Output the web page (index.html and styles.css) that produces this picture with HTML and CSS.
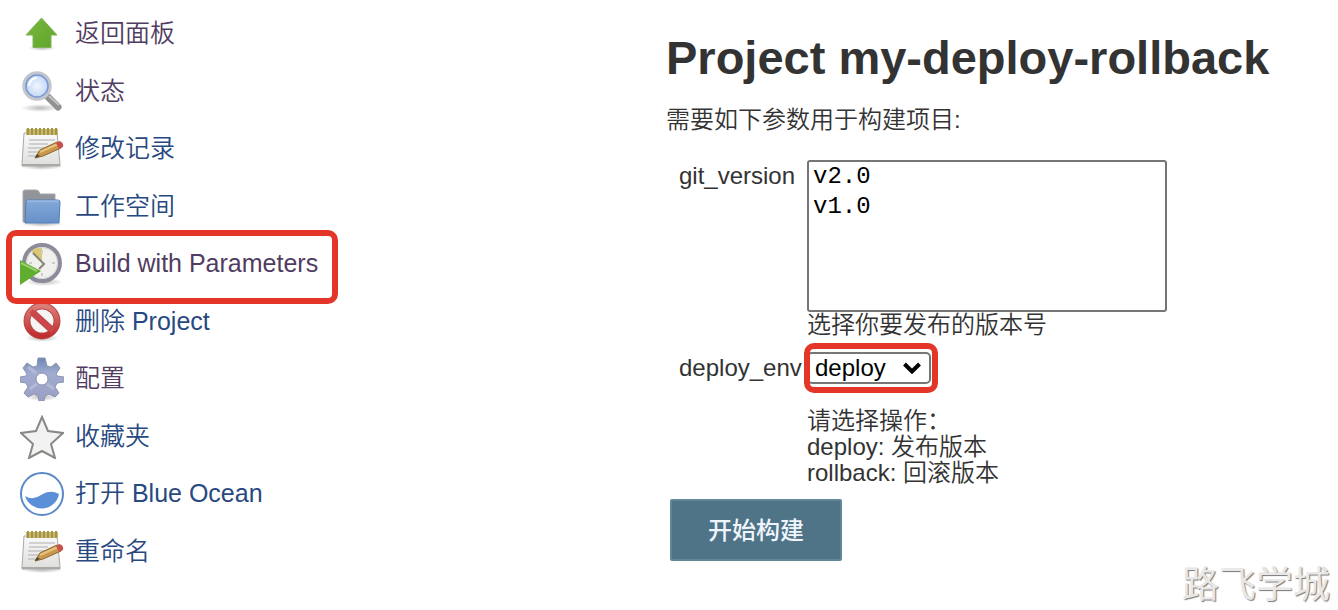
FILE: index.html
```html
<!DOCTYPE html>
<html lang="zh-CN">
<head>
<meta charset="utf-8">
<title>Project my-deploy-rollback</title>
<link rel="stylesheet" href="styles.css">
</head>
<body>
<svg class="defs" aria-hidden="true">
  <defs>
    <linearGradient id="green" x1="0" y1="0" x2="1" y2="1"><stop offset="0" stop-color="#79b83f"/><stop offset="1" stop-color="#5fa52a"/></linearGradient>
    <linearGradient id="paper" x1="0" y1="0" x2="0" y2="1"><stop offset="0" stop-color="#fafafa"/><stop offset="1" stop-color="#dededd"/></linearGradient>
    <linearGradient id="folder" x1="0" y1="0" x2="0" y2="1"><stop offset="0" stop-color="#83a9d8"/><stop offset="1" stop-color="#6690c8"/></linearGradient>
    <radialGradient id="lens"><stop offset="0" stop-color="#f0f6ff"/><stop offset="1" stop-color="#bcd3f3"/></radialGradient>
    <linearGradient id="red" x1="0" y1="0" x2="0" y2="1"><stop offset="0" stop-color="#dc7d78"/><stop offset="1" stop-color="#bf2d2d"/></linearGradient>
    <linearGradient id="gear" x1="0" y1="0" x2="0" y2="1"><stop offset="0" stop-color="#6e86b4"/><stop offset=".35" stop-color="#a0acd0"/><stop offset="1" stop-color="#9a9fc4"/></linearGradient>
    <radialGradient id="shade"><stop offset="0" stop-color="#777" stop-opacity=".5"/><stop offset="1" stop-color="#777" stop-opacity="0"/></radialGradient>
    <symbol id="notepad" viewBox="0 0 44 44">
      <ellipse cx="22" cy="40" rx="21" ry="3" fill="url(#shade)"/>
      <path d="M4 6h33l3 31v2H2v-2z" fill="url(#paper)" stroke="#aaa9a5"/>
      <path d="M2 37h38v2H2z" fill="#aaa9a5"/>
      <path d="M6 2h32v6H6z" fill="#c8b96a"/>
      <path d="M8 1v7m4-7v7m4-7v7m4-7v7m4-7v7m4-7v7m4-7v7m4-7v7" stroke="#a3944a" stroke-width="2"/>
      <path d="M9 13h26M9 17h19M8 21h22M8 25h13M8 29h10" stroke="#c4c4c4" stroke-width="1.5"/>
      <path d="M15 31l5-8 17-8 4 6-18 8z" fill="#c9984c" stroke="#8a672d"/>
      <path d="M20 25l18-8" stroke="#e6c37f" stroke-width="2"/>
      <path d="M36 16l3-2q5 1 4 6l-4 2z" fill="#c9514c"/>
      <path d="M15 31l2-4 3 2z" fill="#4c4538"/>
    </symbol>
  </defs>
</svg>

<div class="page">
  <nav class="tasks" aria-label="项目">
    <ul class="task-list">
      <li class="task"><a class="task-link visited" href="#">
        <svg class="icon" viewBox="0 0 44 44"><ellipse cx="22" cy="36" rx="14" ry="3" fill="url(#shade)"/><path d="M21.500 6L37 23h-6v12.500H13V23H6z" fill="url(#green)" stroke="#80b457"/></svg>
        <span>返回面板</span></a></li>
      <li class="task"><a class="task-link visited" href="#">
        <svg class="icon" viewBox="0 0 44 44"><ellipse cx="20" cy="38" rx="19" ry="4" fill="url(#shade)"/><path d="M28 27l10 10" stroke="#929292" stroke-width="7" stroke-linecap="round"/><path d="M29 26l10 9" stroke="#c4c4c4" stroke-width="2"/><circle cx="17" cy="16" r="13" fill="url(#lens)" stroke="#c3c6cc" stroke-width="3.500"/><circle cx="17" cy="16" r="11" fill="none" stroke="#7698d5" stroke-width="1.500"/><path d="M9 16q1-8 8-8" fill="none" stroke="#fff" stroke-width="2"/></svg>
        <span>状态</span></a></li>
      <li class="task"><a class="task-link" href="#"><svg class="icon"><use href="#notepad"/></svg><span>修改记录</span></a></li>
      <li class="task"><a class="task-link" href="#">
        <svg class="icon" viewBox="0 0 44 44"><ellipse cx="22" cy="39" rx="22" ry="3" fill="url(#shade)"/><path d="M3 37V7q0-2 2-2h11q3 0 4 4h15v28z" fill="#91949a" stroke="#a5a7aa"/><path d="M6 17q0-2 2-2h30q2 0 2 2l-1 21H5z" fill="url(#folder)" stroke="#507eba"/><path d="M7 16h32" stroke="#a9c7ec"/></svg>
        <span>工作空间</span></a></li>
      <li class="task highlighted"><a class="task-link visited" href="#">
        <svg class="icon" viewBox="0 0 44 44"><ellipse cx="24" cy="40" rx="19" ry="4" fill="url(#shade)"/><circle cx="22" cy="21" r="18" fill="#f0f0ec" stroke="#8b8b99" stroke-width="4"/><circle cx="22" cy="21" r="15.500" fill="none" stroke="#d5d5d8"/><path d="M22 21L11 9q5-4 11-3z" fill="#d9c878"/><path d="M22 8v3m13 10h-3M22 34v-3M9 21h3" stroke="#ccc" stroke-width="2"/><path d="M13 11l11 11-5 5" fill="none" stroke="#85837a" stroke-width="2"/><path d="M0 18l21 11L0 43z" fill="#5fae2f"/><path d="M1 21l16 8" stroke="#98cf6c" stroke-width="2"/></svg>
        <span>Build with Parameters</span></a></li>
      <li class="task"><a class="task-link" href="#">
        <svg class="icon" viewBox="0 0 44 44"><ellipse cx="22" cy="38" rx="17" ry="4" fill="url(#shade)"/><circle cx="22" cy="21" r="15" fill="#f7f5f4" stroke="#b6494b" stroke-width="7"/><path d="M11 11l22 20" stroke="#b6494b" stroke-width="7"/><circle cx="22" cy="21" r="15" fill="none" stroke="url(#red)" stroke-width="5"/><path d="M11 11l22 20" stroke="#cb4748" stroke-width="5"/></svg>
        <span>删除 Project</span></a></li>
      <li class="task"><a class="task-link visited" href="#">
        <svg class="icon" viewBox="0 0 44 44"><ellipse cx="22" cy="40" rx="17" ry="4" fill="url(#shade)"/><path fill-rule="evenodd" d="M18 1h7l2 8 4 1 5-4 4 5-4 6 1 2 7 1v5l-7 1-2 4 4 6-4 4-6-3-4 2-1 5h-5l-1-5-4-2-6 3-4-4 4-6-2-4-6-1v-5l6-1 1-2-4-6 4-5 6 4 4-1zM22 16a6 6 0 1 0 0 12 6 6 0 0 0 0-12z" fill="url(#gear)" stroke="#8b94ae" stroke-linejoin="round"/><path d="M8 10l8 6M10 32l7-5m10 0l7 5" stroke="#b4bad6" stroke-width="3"/></svg>
        <span>配置</span></a></li>
      <li class="task"><a class="task-link" href="#">
        <svg class="icon" viewBox="0 0 44 44"><path d="M22 2l6 14 15 2-12 11 4 14-13-7-13 7 4-14L1 18l15-2z" fill="#f1f2f1" stroke="#888985" stroke-width="2"/></svg>
        <span>收藏夹</span></a></li>
      <li class="task"><a class="task-link" href="#">
        <svg class="icon" viewBox="0 0 44 44"><circle cx="22" cy="22" r="21" fill="#fff" stroke="#5b88c7" stroke-width="2"/><path d="M5 24q8 5 16-1 9-6 18-1a17.500 17.500 0 0 1-34 2z" fill="#5b90d8"/></svg>
        <span>打开 Blue Ocean</span></a></li>
      <li class="task"><a class="task-link" href="#"><svg class="icon"><use href="#notepad"/></svg><span>重命名</span></a></li>
    </ul>
  </nav>

  <main class="main">
    <h1 class="title">Project my-deploy-rollback</h1>
    <p class="intro">需要如下参数用于构建项目:</p>
    <form class="form">
      <div class="fields">
        <label class="name" for="version">git_version</label>
        <div>
          <select class="versions" id="version" size="5">
            <option>v2.0</option>
            <option>v1.0</option>
          </select>
          <p class="help">选择你要发布的版本号</p>
        </div>
        <label class="name" for="env">deploy_env</label>
        <div>
          <div class="picker">
            <select class="env" id="env"><option>deploy</option><option>rollback</option></select>
            <svg class="chevron" viewBox="0 0 18 12" aria-hidden="true"><path d="M1.500 2l7.500 7.500L16.500 2" fill="none" stroke="#000" stroke-width="4"/></svg>
          </div>
          <p class="help">请选择操作：<br>deploy: 发布版本<br>rollback: 回滚版本</p>
        </div>
      </div>
      <button class="submit" type="button">开始构建</button>
    </form>
  </main>
</div>
<div class="watermark">路飞学城</div>
</body>
</html>
```
FILE: styles.css
```css
*,
*::after {
  box-sizing: border-box;
}

body {
  margin: 0;
  background: #fff;
  color: #333;
  font-family: "Liberation Sans", "Noto Sans CJK SC", sans-serif;
  font-size: 24px;
  font-weight: 350;
  line-height: 26px;
}

.defs {
  position: absolute;
  width: 0;
  height: 0;
}

.page {
  display: grid;
  grid-template-columns: 1fr 672px;
}

.task-list {
  margin: 0;
  padding: 5px 0 0 20px;
  list-style: none;
}

.task {
  position: relative;
  padding: 7px 0;
}

.task:nth-child(even) { padding-bottom: 6px; }

.task-link {
  display: flex;
  gap: 11px;
  width: fit-content;
  color: #28497f;
  font-size: 25px;
  line-height: 42px;
  text-decoration: none;
}

.task-link.visited { color: #513c62; }

.icon {
  width: 44px;
  height: 44px;
}

.highlighted::after,
.picker::after {
  content: "";
  position: absolute;
  z-index: 1;
  border: 6px solid #e33629;
  border-radius: 10px;
  pointer-events: none;
}

.highlighted::after {
  top: -5px;
  left: -14px;
  width: 332px;
  height: 74px;
}

.main { padding-top: 31px; }

.title {
  margin: 0;
  font-size: 47px;
  font-weight: 700;
  line-height: 54px;
}

.intro {
  margin: 22px 0 27px;
}

.fields {
  display: grid;
  grid-template-columns: 128px 1fr;
  row-gap: 14px;
  padding-left: 13px;
}

.name { padding-top: 3px; }

.versions {
  display: block;
  width: 360px;
  height: 152px;
  padding: 0;
  border: 2px solid #767676;
  border-radius: 3px;
  background: #fff;
  font-family: "Liberation Mono", monospace;
  font-size: 24px;
  overflow: hidden;
}

.versions option {
  min-height: 30px;
  padding: 1px 4px 0;
  color: #000;
  line-height: 29px;
}

.help { margin: 0; }

.picker {
  position: relative;
  width: 124px;
  margin-bottom: 24px;
}

.picker::after {
  inset: -9px -7px -9px -3px;
}

.env {
  display: block;
  width: 100%;
  height: 32px;
  padding: 0 6px;
  border: 2px solid #767676;
  border-radius: 5px;
  background: #fff;
  color: #000;
  font: inherit;
  appearance: none;
}

.chevron {
  position: absolute;
  top: 10px;
  right: 10px;
  width: 18px;
  height: 12px;
  pointer-events: none;
}

.submit {
  display: block;
  margin: 13px 4px;
  padding: 17px 36px 15px;
  border: 2px solid #5f8795;
  border-radius: 2px;
  background: #4f7387;
  color: #eef5fc;
  font: inherit;
  font-weight: 500;
}

.watermark {
  position: absolute;
  right: 8px;
  bottom: 2px;
  color: #e8e8e8;
  font-size: 37px;
  font-weight: 400;
  line-height: 44px;
  text-shadow: 1px 1px 1px #777;
}
```
